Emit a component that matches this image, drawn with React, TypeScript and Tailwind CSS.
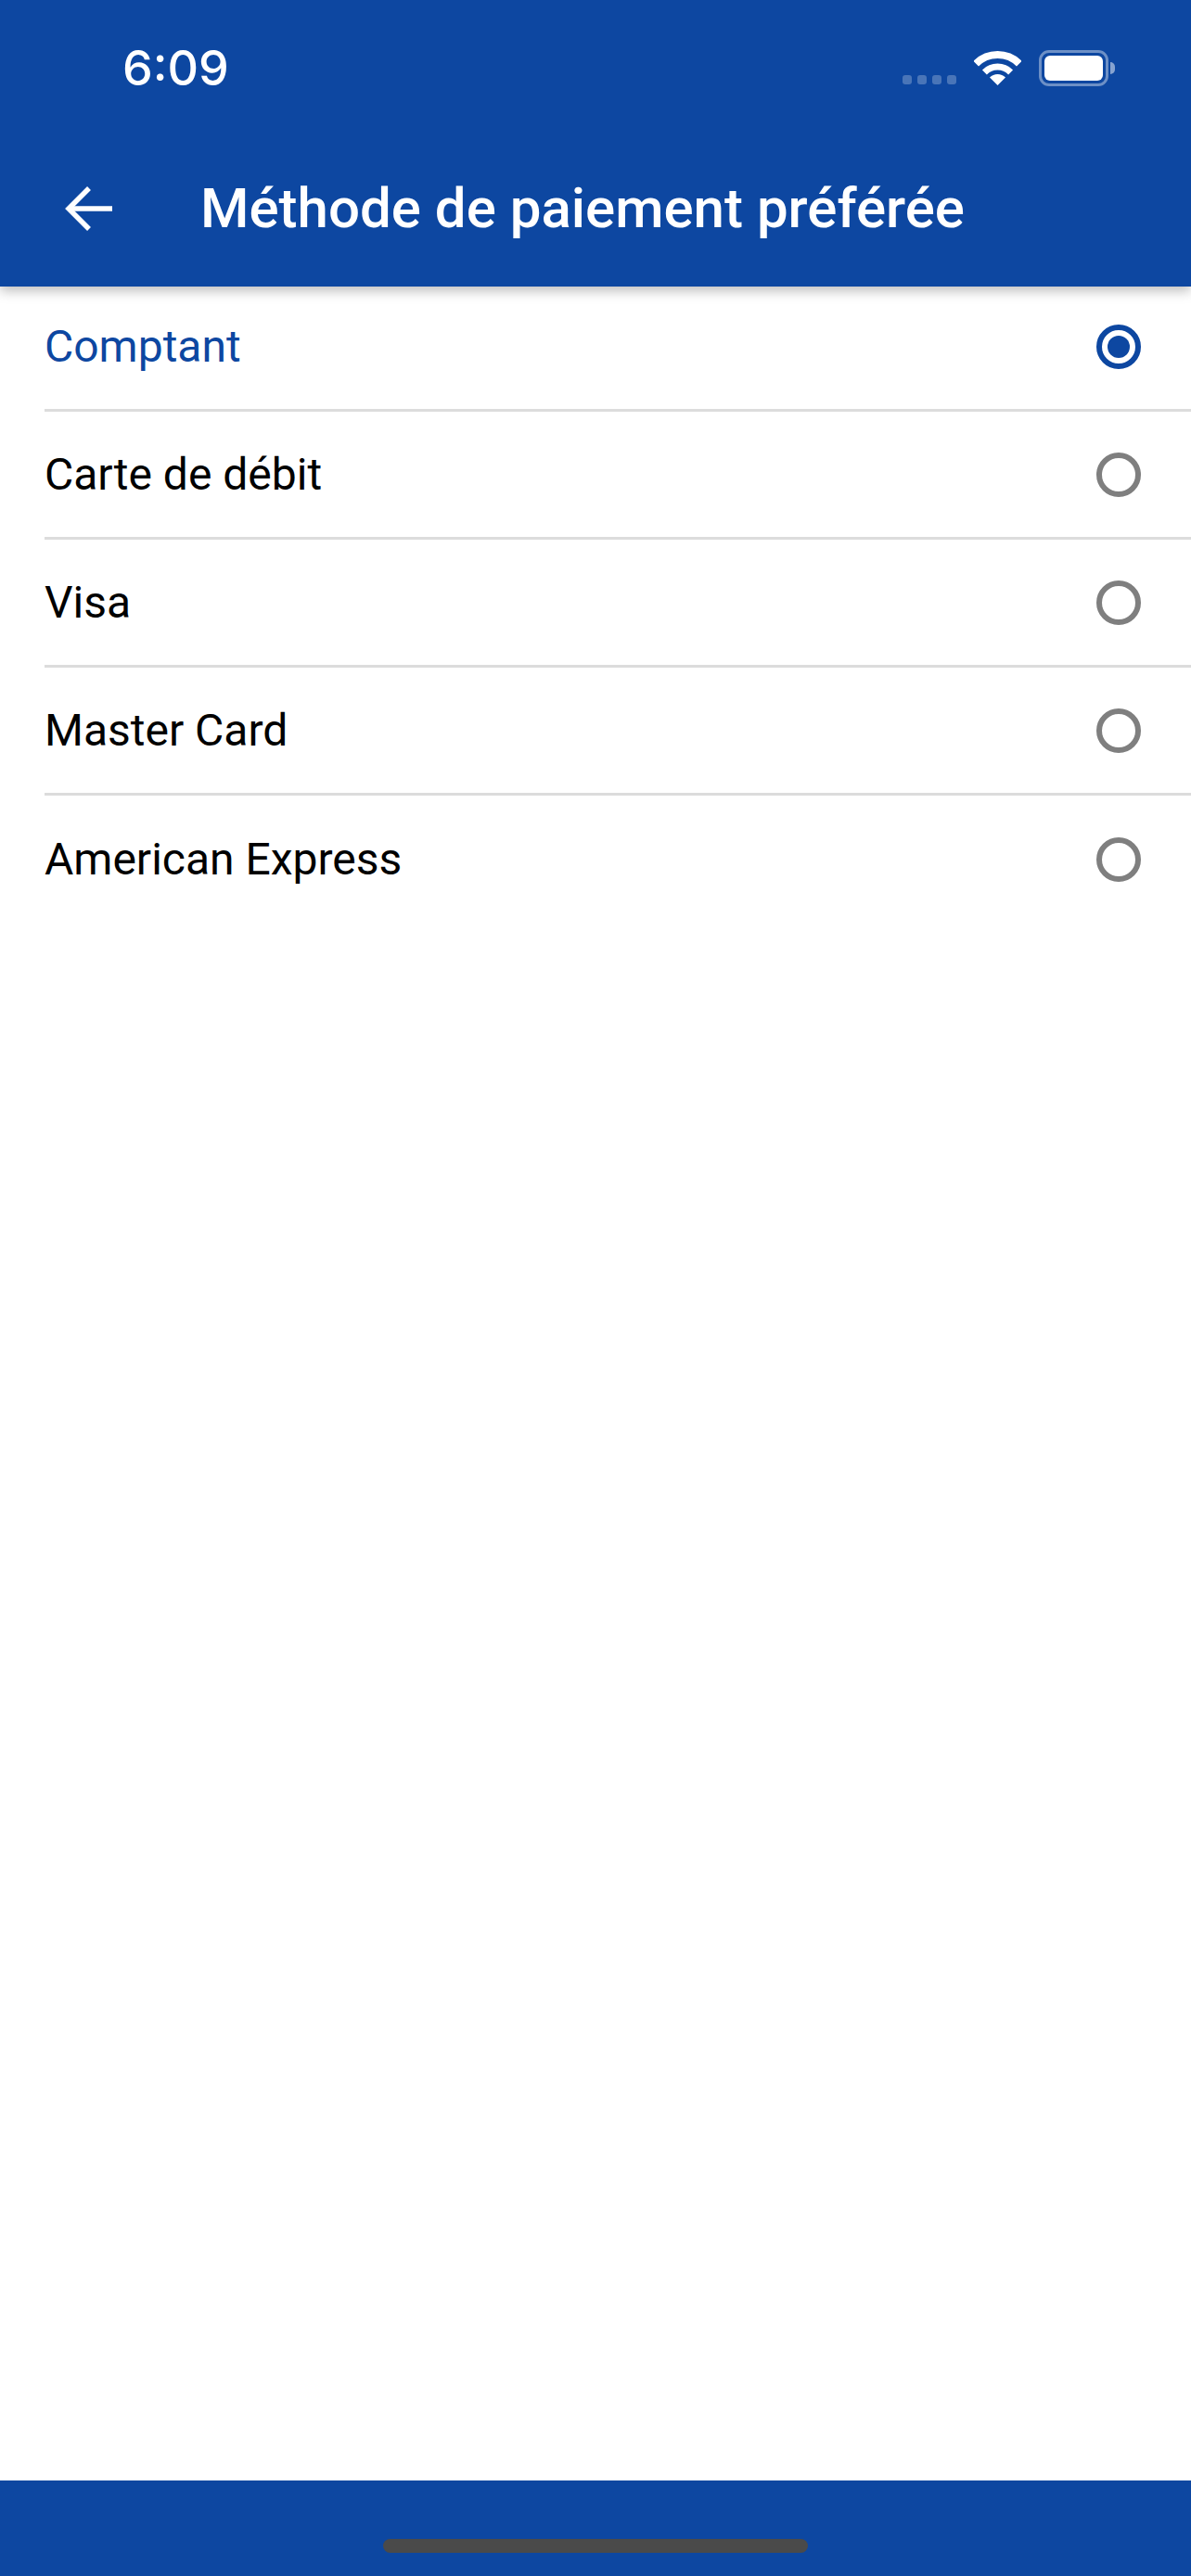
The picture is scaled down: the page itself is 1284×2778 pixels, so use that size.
const options = ["Comptant", "Carte de débit", "Visa", "Master Card", "American Express"];

function Radio({ selected }: { selected: boolean }) {
  return (
    <span
      className={`flex h-[48px] w-[48px] shrink-0 items-center justify-center rounded-full border-[6px] ${
        selected ? "border-[#0d47a1]" : "border-[#7f7f7f]"
      }`}
    >
      {selected && <span className="h-[24px] w-[24px] rounded-full bg-[#0d47a1]" />}
    </span>
  );
}

function WifiIcon() {
  return (
    <svg width="51" height="37" viewBox="0 0 51 37" fill="none" stroke="white">
      <path d="M2.2 13.7A33 33 0 0 1 48.8 13.7" strokeWidth="8" />
      <path d="M11.4 22.9A20 20 0 0 1 39.6 22.9" strokeWidth="7" />
      <path d="M25.5 37L17 28.5A12 12 0 0 1 34 28.5Z" fill="white" stroke="none" />
    </svg>
  );
}

function BatteryIcon() {
  return (
    <div className="flex items-center">
      <div className="flex h-[39px] w-[75px] rounded-[11px] border-[3px] border-white/40 p-[3px]">
        <div className="flex-1 rounded-[6px] bg-white" />
      </div>
      <div className="ml-[2px] h-[13px] w-[5px] rounded-r-full bg-white/50" />
    </div>
  );
}

export default function App() {
  return (
    <div className="flex h-[2778px] w-[1284px] flex-col overflow-hidden bg-white font-['Roboto',sans-serif]">
      {/* Status bar + toolbar */}
      <header className="relative z-10 h-[309px] shrink-0 bg-[#0d47a1] shadow-[0_5px_12px_rgba(0,0,0,0.25)]">
        <div className="flex h-[146px] items-center justify-between pl-[132px] pr-[82px]">
          <span className="mt-[2px] font-['Inter',sans-serif] text-[52px] leading-none font-medium text-white">6:09</span>
          <div className="flex items-center">
            <div className="mt-[26px] flex gap-[6px]">
              <span className="h-[10px] w-[10px] rounded-[3px] bg-white/25" />
              <span className="h-[10px] w-[10px] rounded-[3px] bg-white/25" />
              <span className="h-[10px] w-[10px] rounded-[3px] bg-white/25" />
              <span className="h-[10px] w-[10px] rounded-[3px] bg-white/25" />
            </div>
            <div className="ml-[19px] mr-[19px]">
              <WifiIcon />
            </div>
            <BatteryIcon />
          </div>
        </div>
        <div className="flex h-[158px] items-center pl-[70px]">
          <svg width="51" height="48" viewBox="0 0 51 48" fill="none" stroke="white" strokeWidth="5.5">
            <path d="M51 24H4" />
            <path d="M26 2L4 24L26 46" />
          </svg>
          <h1 className="ml-[95px] text-[60px] leading-none font-medium text-white">Méthode de paiement préférée</h1>
        </div>
      </header>

      {/* Options */}
      <ul className="-mt-[3px] flex-1">
        {options.map((option, i) => (
          <li
            key={option}
            className={`ml-[48px] flex h-[138px] items-center justify-between pr-[54px] text-[48px] ${
              i < options.length - 1 ? "border-b-[3px] border-[#dcdcdc]" : ""
            } ${i === 0 ? "text-[#0d47a1]" : "text-black"}`}
          >
            <span>{option}</span>
            <Radio selected={i === 0} />
          </li>
        ))}
      </ul>

      {/* Home indicator */}
      <footer className="flex h-[103px] shrink-0 items-end justify-center bg-[#0d47a1] pb-[25px]">
        <div className="h-[15px] w-[458px] rounded-full bg-[#4a4a4a]" />
      </footer>
    </div>
  );
}
